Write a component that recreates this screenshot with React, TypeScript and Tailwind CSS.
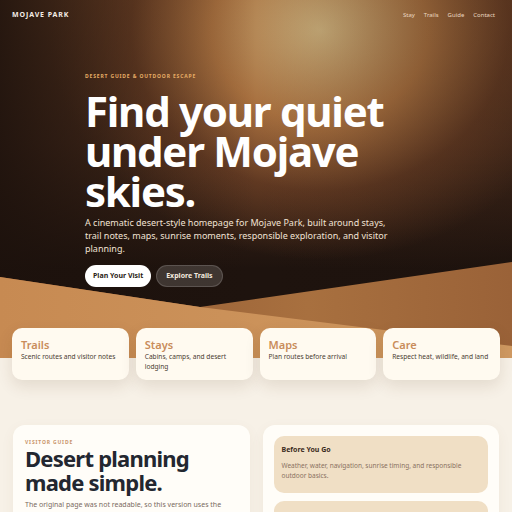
const features = [
  { title: 'Trails', text: 'Scenic routes and visitor notes' },
  { title: 'Stays', text: 'Cabins, camps, and desert lodging' },
  { title: 'Maps', text: 'Plan routes before arrival' },
  { title: 'Care', text: 'Respect heat, wildlife, and land' },
]

const guide = [
  {
    title: 'Before You Go',
    text: 'Weather, water, navigation, sunrise timing, and responsible outdoor basics.',
  },
  {
    title: 'Where to Stay',
    text: 'Cabins, campgrounds, and quiet desert lodging near the park.',
  },
]

function Dunes() {
  return (
    <svg
      className="absolute inset-x-0 bottom-0 w-full h-[100px]"
      viewBox="0 0 512 100"
      preserveAspectRatio="none"
    >
      <defs>
        <linearGradient id="duneLeft" x1="0" y1="0" x2="1" y2="0">
          <stop offset="0" stopColor="#c78a52" />
          <stop offset="1" stopColor="#d09a62" />
        </linearGradient>
        <linearGradient id="duneRight" x1="0" y1="0" x2="1" y2="0">
          <stop offset="0" stopColor="#8e5530" />
          <stop offset="0.6" stopColor="#a8703f" />
          <stop offset="1" stopColor="#9a6238" />
        </linearGradient>
      </defs>
      <path d="M0 19 L200 49 L512 4 L512 100 L0 100 Z" fill="url(#duneRight)" />
      <path d="M0 19 L200 49 L512 88 L512 100 L0 100 Z" fill="url(#duneLeft)" />
    </svg>
  )
}

export default function App() {
  return (
    <div className="min-h-screen bg-[#f7f1e7] font-['Noto_Sans',sans-serif]">
      <section className="relative h-[358px] overflow-hidden bg-[radial-gradient(ellipse_270px_230px_at_320px_30px,#c7ab78_0%,#a8703f_40%,rgba(120,70,40,0.6)_70%,transparent_100%),linear-gradient(180deg,#6a4025_0%,#4a2d1d_40%,#1e130e_75%,#1e130e_100%)]">
        <div className="absolute inset-0 bg-[linear-gradient(90deg,rgba(28,17,12,0.85)_0%,rgba(28,17,12,0.25)_30%,transparent_50%,rgba(28,17,12,0.3)_100%)]" />
        <Dunes />
        <div className="relative">
          <nav className="flex items-center justify-between px-3 pt-[10px]">
            <span className="text-[7px] font-bold leading-[10px] tracking-[0.13em] text-[#f4ece4]">MOJAVE PARK</span>
            <div className="flex gap-[9px] pr-[5px] text-[6px] leading-[10px] text-[#ead8c0]">
              <span>Stay</span>
              <span>Trails</span>
              <span>Guide</span>
              <span>Contact</span>
            </div>
          </nav>
          <div className="pl-[85px] pt-[52px]">
            <p className="text-[5px] font-bold leading-[8px] tracking-[0.17em] text-[#e6ad66]">DESERT GUIDE &amp; OUTDOOR ESCAPE</p>
            <h1 className="mt-[11px] w-[320px] text-[42px] font-bold leading-[40px] tracking-[-0.03em] text-white">
              Find your quiet under Mojave skies.
            </h1>
            <p className="mt-[5px] w-[308px] text-[9px] leading-[13px] text-[#f1e2d4]">
              A cinematic desert-style homepage for Mojave Park, built around stays, trail notes, maps, sunrise moments, responsible exploration, and visitor planning.
            </p>
            <div className="mt-[10px] flex gap-[5px]">
              <button className="h-[22px] rounded-full bg-white px-[8px] text-[7px] font-bold text-[#2a1c14]">Plan Your Visit</button>
              <button className="h-[22px] rounded-full border border-white/15 bg-white/15 px-[9px] text-[7px] font-bold text-[#f3e8de]">Explore Trails</button>
            </div>
          </div>
        </div>
      </section>

      <div className="relative -mt-[30px] grid grid-cols-4 gap-[7px] px-3">
        {features.map((f) => (
          <div key={f.title} className="h-[52px] rounded-[10px] bg-[#fffaf0] pl-[9px] pr-[6px] pt-[10px] shadow-[0_6px_16px_rgba(80,50,20,0.12)]">
            <p className="text-[11px] font-semibold leading-[14px] text-[#c98c5a]">{f.title}</p>
            <p className="text-[6.6px] leading-[10px] text-[#4a3b31]">{f.text}</p>
          </div>
        ))}
      </div>

      <div className="mt-[45px] grid grid-cols-2 gap-[13px] px-[13px]">
        <div className="rounded-[12px] bg-[#fffdf8] px-[12px] pt-[13px] pb-4 shadow-[0_4px_14px_rgba(120,90,50,0.06)]">
          <p className="text-[5px] font-bold leading-[8px] tracking-[0.17em] text-[#c9946a]">VISITOR GUIDE</p>
          <h2 className="text-[22px] font-bold leading-[24px] tracking-[-0.035em] text-[#232730]">
            Desert planning made simple.
          </h2>
          <p className="mt-[5px] text-[7px] leading-[11px] text-[#7a6a60]">
            The original page was not readable, so this version uses the clearest theme: desert guides, stays, trails, maps, and visitor care.
          </p>
        </div>
        <div className="flex flex-col gap-[8px] rounded-[12px] bg-[#fffdf8] px-[11px] pt-[11px] pb-4 shadow-[0_4px_14px_rgba(120,90,50,0.06)]">
          {guide.map((g) => (
            <div key={g.title} className="rounded-[10px] bg-[#f0dfc5] px-[8px] pt-[9px] pb-[13px]">
              <p className="text-[7px] font-bold leading-[10px] text-[#3a2a20]">{g.title}</p>
              <p className="mt-[6px] text-[6.5px] leading-[9.5px] text-[#8a7262]">{g.text}</p>
            </div>
          ))}
        </div>
      </div>
    </div>
  )
}
